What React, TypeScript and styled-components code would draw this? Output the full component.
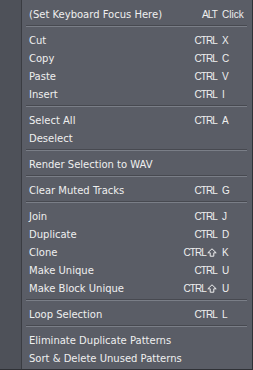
import React from 'react';
import styled, { createGlobalStyle } from 'styled-components';

const Global = createGlobalStyle`
  html, body {
    margin: 0;
    padding: 0;
    background: #585b64;
  }
`;

const Menu = styled.div`
  width: 253px;
  height: 370px;
  box-sizing: border-box;
  display: flex;
  background: #5a5d66;
  border-right: 1px solid #2f3136;
  border-bottom: 1px solid #2f3136;
  overflow: hidden;
`;

const Gutter = styled.div`
  width: 21px;
  flex: none;
  background: #4e5159;
  border-right: 1px solid #3a3c42;
`;

const Body = styled.div`
  flex: 1;
  padding-top: 5px;
  display: flex;
  flex-direction: column;
`;

const Row = styled.div`
  height: 18px;
  display: flex;
  align-items: center;
  padding-left: 7px;
  color: #efefef;
  font-family: 'DejaVu Sans', Verdana, sans-serif;
  font-size: 10px;
  white-space: nowrap;
`;

const Label = styled.span`
  flex: 1;
`;

const Shortcut = styled.span`
  display: flex;
  align-items: center;
  font-family: 'Liberation Sans Narrow', 'Liberation Sans', sans-serif;
  font-size: 10px;
  color: #efefef;
`;

const Mod = styled.span`
  width: 40px;
  display: flex;
  justify-content: flex-end;
  align-items: center;
  gap: 1px;
  letter-spacing: -0.9px;
`;

const Key = styled.span`
  width: 30px;
  margin-left: 5px;
  font-family: 'Liberation Sans', sans-serif;
`;

const Sep = styled.div`
  height: 8px;
  display: flex;
  flex-direction: column;
  padding-top: 2px;
  box-sizing: border-box;
  margin: 0 5px 0 4px;

  &::before {
    content: '';
    display: block;
    height: 1px;
    background: #474950;
  }
  &::after {
    content: '';
    display: block;
    height: 1px;
    background: #7a7e87;
  }
`;

const ShiftIcon = () => (
  <svg width="10" height="9" viewBox="0 0 10 9">
    <path
      d="M5 0.8 L9.2 4.8 L6.8 4.8 L6.8 8.2 L3.2 8.2 L3.2 4.8 L0.8 4.8 Z"
      fill="none"
      stroke="#efefef"
      strokeWidth="1"
    />
  </svg>
);

type Item = { label: string; mod?: string; key?: string; shift?: boolean } | 'sep';

const items: Item[] = [
  { label: '(Set Keyboard Focus Here)', mod: 'ALT', key: 'Click' },
  'sep',
  { label: 'Cut', mod: 'CTRL', key: 'X' },
  { label: 'Copy', mod: 'CTRL', key: 'C' },
  { label: 'Paste', mod: 'CTRL', key: 'V' },
  { label: 'Insert', mod: 'CTRL', key: 'I' },
  'sep',
  { label: 'Select All', mod: 'CTRL', key: 'A' },
  { label: 'Deselect' },
  'sep',
  { label: 'Render Selection to WAV' },
  'sep',
  { label: 'Clear Muted Tracks', mod: 'CTRL', key: 'G' },
  'sep',
  { label: 'Join', mod: 'CTRL', key: 'J' },
  { label: 'Duplicate', mod: 'CTRL', key: 'D' },
  { label: 'Clone', mod: 'CTRL', key: 'K', shift: true },
  { label: 'Make Unique', mod: 'CTRL', key: 'U' },
  { label: 'Make Block Unique', mod: 'CTRL', key: 'U', shift: true },
  'sep',
  { label: 'Loop Selection', mod: 'CTRL', key: 'L' },
  'sep',
  { label: 'Eliminate Duplicate Patterns' },
  { label: 'Sort & Delete Unused Patterns' },
];

export default function App() {
  return (
    <>
      <Global />
      <Menu>
        <Gutter />
        <Body>
          {items.map((it, i) =>
            it === 'sep' ? (
              <Sep key={i} />
            ) : (
              <Row key={i}>
                <Label>{it.label}</Label>
                {it.mod && (
                  <Shortcut>
                    <Mod>
                      {it.mod}
                      {it.shift && <ShiftIcon />}
                    </Mod>
                    <Key>{it.key}</Key>
                  </Shortcut>
                )}
              </Row>
            )
          )}
        </Body>
      </Menu>
    </>
  );
}
